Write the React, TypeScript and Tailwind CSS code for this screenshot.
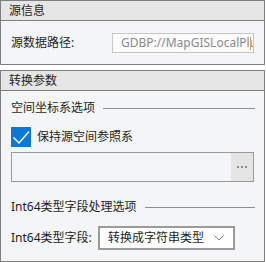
import React from "react";

const font = { fontFamily: '"Noto Sans", "Noto Sans CJK SC", sans-serif' };

function GroupTitle({ text }: { text: string }) {
  return (
    <div className="flex items-center h-[16px] leading-[16px]">
      <span className="text-[12px] text-[#1e1e1e] whitespace-nowrap">{text}</span>
      <div className="flex-1 h-px bg-[#8c8c8c] ml-[8px]" />
    </div>
  );
}

export default function App() {
  return (
    <div className="w-[266px] h-[262px] bg-white flex flex-col" style={font}>
      <section className="w-[265px] h-[65px] border border-[#7f7f7f] flex flex-col bg-[#f4f5f7]">
        <div className="h-[20px] bg-[#e6e6e6] border-b border-[#7f7f7f] pl-[8px] flex items-center text-[12px] text-[#1e1e1e] leading-none">
          源信息
        </div>
        <div className="flex-1 flex items-center pl-[10px] pr-[10px]">
          <span className="text-[12px] text-[#1e1e1e] w-[101px] whitespace-nowrap">源数据路径:</span>
          <div className="flex-1 h-[20px] border border-[#c6c6c6] bg-[#fbfbfb] flex items-center pl-[8px] overflow-hidden relative">
            <span className="text-[12px] text-[#8a8a8a] whitespace-nowrap leading-none">GDBP://MapGISLocalPlus/</span>
            <div className="absolute right-[2px] top-[3px] w-px h-[13px] bg-[#e8a04a]" />
          </div>
        </div>
      </section>
      <section className="mt-[5px] w-[265px] h-[192px] border border-[#7f7f7f] flex flex-col bg-[#f4f5f7]">
        <div className="h-[20px] bg-[#e6e6e6] border-b border-[#7f7f7f] pl-[8px] flex items-center text-[12px] text-[#1e1e1e] leading-none">
          转换参数
        </div>
        <div className="flex-1 flex flex-col pl-[10px] pr-[9px] pt-[9px]">
          <GroupTitle text="空间坐标系选项" />
          <div className="mt-[11px] flex items-center h-[20px]">
            <div className="w-[20px] h-[20px] bg-[#0a78d7] flex items-center justify-center">
              <svg width="20" height="20" viewBox="0 0 20 20">
                <path d="M2.5 10.5 L8 16 L18 4.5" fill="none" stroke="#ffffff" strokeWidth="1.4" />
              </svg>
            </div>
            <span className="ml-[6px] text-[12px] text-[#1e1e1e] whitespace-nowrap">保持源空间参照系</span>
          </div>
          <div className="mt-[5px] h-[30px] mr-[1px] border border-[#9a9a9a] flex">
            <div className="flex-1" />
            <div className="w-[22px] bg-[#e4e4e4] flex items-center justify-center gap-[2px]">
              <div className="w-[2px] h-[2px] bg-[#8a8a8a]" />
              <div className="w-[2px] h-[2px] bg-[#8a8a8a]" />
              <div className="w-[2px] h-[2px] bg-[#8a8a8a]" />
            </div>
          </div>
          <div className="mt-[17px]">
            <GroupTitle text="Int64类型字段处理选项" />
          </div>
          <div className="mt-[11px] flex items-center h-[24px]">
            <span className="text-[12px] text-[#1e1e1e] w-[87px] whitespace-nowrap">Int64类型字段:</span>
            <div className="w-[137px] h-[24px] border-2 border-[#9a9a9a] bg-white flex items-center pl-[8px] pr-[9px]">
              <span className="flex-1 text-[12px] text-[#1e1e1e] whitespace-nowrap leading-none">转换成字符串类型</span>
              <svg width="10" height="6" viewBox="0 0 10 6">
                <path d="M0.5 0.5 L5 5 L9.5 0.5" fill="none" stroke="#7a7a7a" strokeWidth="1" />
              </svg>
            </div>
          </div>
        </div>
      </section>
    </div>
  );
}
